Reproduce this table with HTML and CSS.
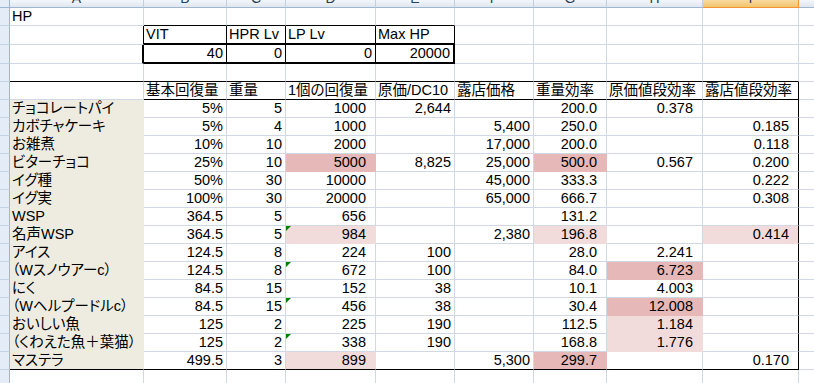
FILE: index.html
```html
<!DOCTYPE html>
<html lang="ja">
<head>
<meta charset="utf-8">
<title>HP</title>
<link rel="stylesheet" href="styles.css">
</head>
<body>
<div class="sheet">
  <!-- column headers -->
  <div class="ch corner"></div>
  <div class="ch"><span>A</span></div>
  <div class="ch"><span>B</span></div>
  <div class="ch"><span>C</span></div>
  <div class="ch"><span>D</span></div>
  <div class="ch"><span>E</span></div>
  <div class="ch"><span>F</span></div>
  <div class="ch"><span>G</span></div>
  <div class="ch"><span>H</span></div>
  <div class="ch active"><span>I</span></div>
  <div class="ch"><span>J</span></div>

  <!-- row 1 -->
  <div class="rh"></div>
  <div class="c">HP</div>
  <div class="c bb"></div><div class="c bb"></div><div class="c bb"></div><div class="c bb"></div>
  <div class="c"></div><div class="c"></div><div class="c"></div><div class="c"></div><div class="c"></div>

  <!-- row 2 -->
  <div class="rh"></div>
  <div class="c br"></div>
  <div class="c br bb2">VIT</div>
  <div class="c br bb2">HPR Lv</div>
  <div class="c br bb2">LP Lv</div>
  <div class="c br bb2">Max HP</div>
  <div class="c"></div><div class="c"></div><div class="c"></div><div class="c"></div><div class="c"></div>

  <!-- row 3 -->
  <div class="rh"></div>
  <div class="c br2"></div>
  <div class="c r br bb2">40</div>
  <div class="c r br bb2">0</div>
  <div class="c r br bb2">0</div>
  <div class="c r br2 bb2">20000</div>
  <div class="c"></div><div class="c"></div><div class="c"></div><div class="c"></div><div class="c"></div>

  <!-- row 4 -->
  <div class="rh"></div>
  <div class="c bb"></div><div class="c bb"></div><div class="c bb"></div><div class="c bb"></div><div class="c bb"></div>
  <div class="c bb"></div><div class="c bb"></div><div class="c bb"></div><div class="c bb"></div>
  <div class="c"></div>

  <!-- row 5 -->
  <div class="rh"></div>
  <div class="c"></div>
  <div class="c bb">基本回復量</div>
  <div class="c bb">重量</div>
  <div class="c bb">1個の回復量</div>
  <div class="c bb">原価/DC10</div>
  <div class="c bb">露店価格</div>
  <div class="c bb">重量効率</div>
  <div class="c bb">原価値段効率</div>
  <div class="c bb br">露店値段効率</div>
  <div class="c"></div>

  <!-- row 6 -->
  <div class="rh"></div>
  <div class="c beige">チョコレートパイ</div>
  <div class="c r">5%</div><div class="c r">5</div><div class="c n">1000</div>
  <div class="c r">2,644</div><div class="c r"></div><div class="c n">200.0</div>
  <div class="c n">0.378</div><div class="c n br"></div><div class="c"></div>

  <!-- row 7 -->
  <div class="rh"></div>
  <div class="c beige">カボチャケーキ</div>
  <div class="c r">5%</div><div class="c r">4</div><div class="c n">1000</div>
  <div class="c r"></div><div class="c r">5,400</div><div class="c n">250.0</div>
  <div class="c n"></div><div class="c n br">0.185</div><div class="c"></div>

  <!-- row 8 -->
  <div class="rh"></div>
  <div class="c beige">お雑煮</div>
  <div class="c r">10%</div><div class="c r">10</div><div class="c n">2000</div>
  <div class="c r"></div><div class="c r">17,000</div><div class="c n">200.0</div>
  <div class="c n"></div><div class="c n br">0.118</div><div class="c"></div>

  <!-- row 9 -->
  <div class="rh"></div>
  <div class="c beige">ビターチョコ</div>
  <div class="c r">25%</div><div class="c r">10</div><div class="c n pk1">5000</div>
  <div class="c r">8,825</div><div class="c r">25,000</div><div class="c n pk1">500.0</div>
  <div class="c n">0.567</div><div class="c n br">0.200</div><div class="c"></div>

  <!-- row 10 -->
  <div class="rh"></div>
  <div class="c beige">イグ種</div>
  <div class="c r">50%</div><div class="c r">30</div><div class="c n">10000</div>
  <div class="c r"></div><div class="c r">45,000</div><div class="c n">333.3</div>
  <div class="c n"></div><div class="c n br">0.222</div><div class="c"></div>

  <!-- row 11 -->
  <div class="rh"></div>
  <div class="c beige">イグ実</div>
  <div class="c r">100%</div><div class="c r">30</div><div class="c n">20000</div>
  <div class="c r"></div><div class="c r">65,000</div><div class="c n">666.7</div>
  <div class="c n"></div><div class="c n br">0.308</div><div class="c"></div>

  <!-- row 12 -->
  <div class="rh"></div>
  <div class="c beige">WSP</div>
  <div class="c r">364.5</div><div class="c r">5</div><div class="c n">656</div>
  <div class="c r"></div><div class="c r"></div><div class="c n">131.2</div>
  <div class="c n"></div><div class="c n br"></div><div class="c"></div>

  <!-- row 13 -->
  <div class="rh"></div>
  <div class="c beige">名声WSP</div>
  <div class="c r">364.5</div><div class="c r">5</div><div class="c n pk2 tri">984</div>
  <div class="c r"></div><div class="c r">2,380</div><div class="c n pk2">196.8</div>
  <div class="c n"></div><div class="c n pk2 br">0.414</div><div class="c"></div>

  <!-- row 14 -->
  <div class="rh"></div>
  <div class="c beige">アイス</div>
  <div class="c r">124.5</div><div class="c r">8</div><div class="c n">224</div>
  <div class="c r">100</div><div class="c r"></div><div class="c n">28.0</div>
  <div class="c n">2.241</div><div class="c n br"></div><div class="c"></div>

  <!-- row 15 -->
  <div class="rh"></div>
  <div class="c beige">（Wスノウアーc）</div>
  <div class="c r">124.5</div><div class="c r">8</div><div class="c n tri">672</div>
  <div class="c r">100</div><div class="c r"></div><div class="c n">84.0</div>
  <div class="c n pk1">6.723</div><div class="c n br"></div><div class="c"></div>

  <!-- row 16 -->
  <div class="rh"></div>
  <div class="c beige">にく</div>
  <div class="c r">84.5</div><div class="c r">15</div><div class="c n">152</div>
  <div class="c r">38</div><div class="c r"></div><div class="c n">10.1</div>
  <div class="c n">4.003</div><div class="c n br"></div><div class="c"></div>

  <!-- row 17 -->
  <div class="rh"></div>
  <div class="c beige">（Wヘルプードルc）</div>
  <div class="c r">84.5</div><div class="c r">15</div><div class="c n tri">456</div>
  <div class="c r">38</div><div class="c r"></div><div class="c n">30.4</div>
  <div class="c n pk1">12.008</div><div class="c n br"></div><div class="c"></div>

  <!-- row 18 -->
  <div class="rh"></div>
  <div class="c beige">おいしい魚</div>
  <div class="c r">125</div><div class="c r">2</div><div class="c n">225</div>
  <div class="c r">190</div><div class="c r"></div><div class="c n">112.5</div>
  <div class="c n pk2">1.184</div><div class="c n br"></div><div class="c"></div>

  <!-- row 19 -->
  <div class="rh"></div>
  <div class="c beige">（くわえた魚＋葉猫）</div>
  <div class="c r">125</div><div class="c r">2</div><div class="c n tri">338</div>
  <div class="c r">190</div><div class="c r"></div><div class="c n">168.8</div>
  <div class="c n pk2">1.776</div><div class="c n br"></div><div class="c"></div>

  <!-- row 20 -->
  <div class="rh"></div>
  <div class="c beige bb">マステラ</div>
  <div class="c r bb">499.5</div><div class="c r bb">3</div><div class="c n pk2 bb">899</div>
  <div class="c r bb"></div><div class="c r bb">5,300</div><div class="c n pk1 bb">299.7</div>
  <div class="c n bb"></div><div class="c n bb br">0.170</div><div class="c"></div>

  <!-- row 21 -->
  <div class="rh"></div>
  <div class="c"></div><div class="c"></div><div class="c"></div><div class="c"></div><div class="c"></div>
  <div class="c"></div><div class="c"></div><div class="c"></div><div class="c"></div><div class="c"></div>
</div>
</body>
</html>
```
FILE: styles.css
```css
html, body {
  margin: 0;
  padding: 0;
  background: #ffffff;
  overflow: hidden;
}

.sheet {
  display: grid;
  grid-template-columns: 10px 134px 83px 59px 90px 79px 79px 73px 96px 96px 64px;
  grid-template-rows: 8px 18px 19px 19px 18px 18px repeat(15, 18px) 18px;
  font-family: "Liberation Sans", "Noto Sans CJK JP", sans-serif;
  font-size: 14.5px;
  font-feature-settings: "palt";
  color: #000000;
}

.c {
  box-sizing: border-box;
  position: relative;
  display: flex;
  align-items: flex-end;
  white-space: nowrap;
  overflow: hidden;
  padding: 0 2px 1px 2px;
  line-height: 15px;
  border-right: 1px solid #d0d7e5;
  border-bottom: 1px solid #d0d7e5;
}

.r {
  justify-content: flex-end;
  padding-right: 3px;
}

.n {
  justify-content: flex-end;
  padding-right: 9px;
}

/* fills */
.beige {
  background: #eeece1;
  border-right-color: #eeece1;
  border-bottom-color: #eeece1;
}

.pk1 {
  background: #e6b8b7;
  border-right-color: #e6b8b7;
  border-bottom-color: #e6b8b7;
}

.pk2 {
  background: #f2dcdb;
  border-right-color: #f2dcdb;
  border-bottom-color: #f2dcdb;
}

/* black borders */
.bb {
  border-bottom: 1px solid #000000;
}

.br {
  border-right: 1px solid #000000;
}

.bb2 {
  border-bottom: 2px solid #000000;
}

.br2 {
  border-right: 2px solid #000000;
}

/* error indicator triangle */
.tri::before {
  content: "";
  position: absolute;
  left: 0;
  top: 0;
  width: 0;
  height: 0;
  border-top: 5px solid #008000;
  border-right: 5px solid transparent;
}

/* column headers */
.ch {
  box-sizing: border-box;
  display: flex;
  align-items: flex-end;
  justify-content: center;
  overflow: hidden;
  background: linear-gradient(#f3f7fb, #dfe6ef);
  border-right: 1px solid #c3cfdf;
  border-bottom: 1px solid #9eb6ce;
  font-family: "Liberation Sans", sans-serif;
  font-size: 14px;
  color: #2c3e55;
}

.ch span {
  line-height: 14px;
  margin-bottom: 2px;
  flex: none;
}

.ch.corner {
  background: #e4ecf7;
  border-right-color: #9eb6ce;
}

.ch.active {
  background: linear-gradient(#f9dba0, #f3c46d);
  border-right-color: #f29536;
  border-bottom-color: #f29536;
}

/* row headers */
.rh {
  box-sizing: border-box;
  background: #e4ecf7;
  border-right: 1px solid #9eb6ce;
  border-bottom: 1px solid #c5d3e3;
}
```
